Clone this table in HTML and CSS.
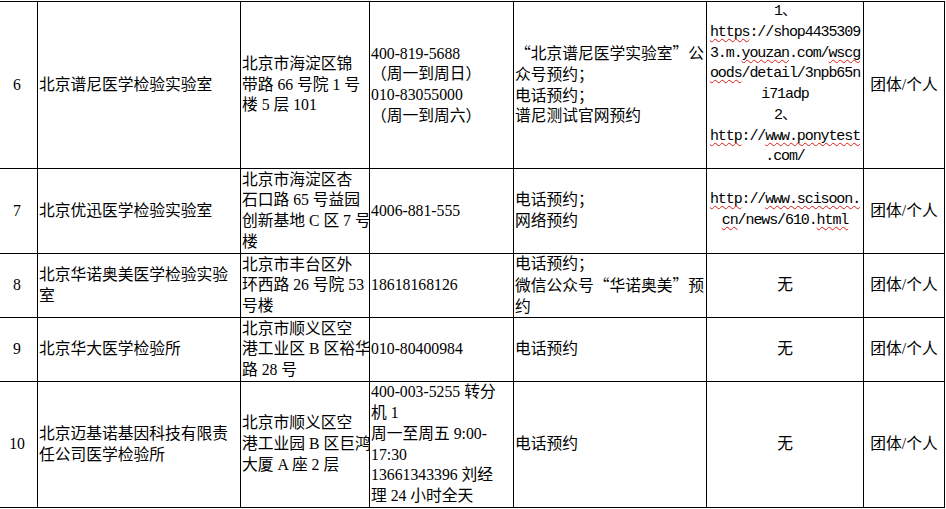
FILE: index.html
```html
<!DOCTYPE html>
<html lang="zh-CN">
<head>
<meta charset="utf-8">
<title>医学检验实验室</title>
<link rel="stylesheet" href="styles.css">
</head>
<body>
<table class="grid">
  <colgroup>
    <col class="c-no"><col class="c-name"><col class="c-addr"><col class="c-tel"><col class="c-way"><col class="c-url"><col class="c-type">
  </colgroup>
  <tbody>
    <tr class="r6">
      <td class="ctr">6</td>
      <td>北京谱尼医学检验实验室</td>
      <td>北京市海淀区锦<br>带路 66 号院 1 号<br>楼 5 层 101</td>
      <td>400-819-5688<br>（周一到周日）<br>010-83055000<br>（周一到周六）</td>
      <td><span class="q">“</span>北京谱尼医学实验室<span class="q">”</span>公<br>众号预约；<br>电话预约；<br>谱尼测试官网预约</td>
      <td class="url">1、<br><span class="sp">https</span>://shop4435309<br>3.m.<span class="sp">youzan</span>.com/<span class="sp">wscg</span><br><span class="sp">oods</span>/detail/3npb65n<br>i71adp<br>2、<br><span class="sp">http</span>://<span class="sp">www.ponytest</span><br>.com/</td>
      <td class="ctr">团体/个人</td>
    </tr>
    <tr class="r7">
      <td class="ctr">7</td>
      <td>北京优迅医学检验实验室</td>
      <td>北京市海淀区杏<br>石口路 65 号益园<br>创新基地 C 区 7 号<br>楼</td>
      <td>4006-881-555</td>
      <td>电话预约；<br>网络预约</td>
      <td class="url"><span class="sp">http</span>://<span class="sp">www.scisoon.</span><br><span class="sp">cn</span>/news/610.<span class="sp">html</span></td>
      <td class="ctr">团体/个人</td>
    </tr>
    <tr class="r8">
      <td class="ctr">8</td>
      <td>北京华诺奥美医学检验实验<br>室</td>
      <td>北京市丰台区外<br>环西路 26 号院 53<br>号楼</td>
      <td>18618168126</td>
      <td>电话预约；<br>微信公众号<span class="q">“</span>华诺奥美<span class="q">”</span>预<br>约</td>
      <td class="ctr">无</td>
      <td class="ctr">团体/个人</td>
    </tr>
    <tr class="r9">
      <td class="ctr">9</td>
      <td>北京华大医学检验所</td>
      <td>北京市顺义区空<br>港工业区 B 区裕华<br>路 28 号</td>
      <td>010-80400984</td>
      <td>电话预约</td>
      <td class="ctr">无</td>
      <td class="ctr">团体/个人</td>
    </tr>
    <tr class="r10">
      <td class="ctr">10</td>
      <td>北京迈基诺基因科技有限责<br>任公司医学检验所</td>
      <td>北京市顺义区空<br>港工业园 B 区巨鸿<br>大厦 A 座 2 层</td>
      <td>400-003-5255 转分<br>机 1<br>周一至周五 9:00-<br>17:30<br>13661343396 刘经<br>理 24 小时全天</td>
      <td>电话预约</td>
      <td class="ctr">无</td>
      <td class="ctr">团体/个人</td>
    </tr>
  </tbody>
</table>
</body>
</html>
```

FILE: styles.css
```css
html, body {
  margin: 0;
  padding: 0;
  background: #fff;
}

body {
  font-family: "Liberation Serif", "Noto Sans CJK SC", serif;
  font-size: 15.75px;
  line-height: 20.75px;
  color: #000;
  overflow: hidden;
}

.grid {
  border-collapse: collapse;
  table-layout: fixed;
  width: 948px;
  margin: 1px 0 0 -4px;
}

.c-no { width: 41px; }
.c-name { width: 203px; }
.c-addr { width: 129px; }
.c-tel { width: 144px; }
.c-way { width: 193px; }
.c-url { width: 157px; }
.c-type { width: 81px; }

.grid td {
  border: 1px solid #000;
  padding: 0 0 0 1px;
  vertical-align: middle;
  text-align: left;
  white-space: nowrap;
  overflow: hidden;
}

.grid td.ctr {
  text-align: center;
  padding: 0;
}

.grid td.url {
  text-align: center;
  padding: 0;
  font-family: "Liberation Mono", "Noto Sans CJK SC", monospace;
  font-size: 15px;
  letter-spacing: -1.1px;
}

.r6 { height: 167px; }
.r7 { height: 85px; }
.r8 { height: 64px; }
.r9 { height: 64px; }
.r10 { height: 124px; }

.q {
  display: inline-block;
  width: 1em;
  text-align: center;
  font-family: "Noto Sans CJK SC", sans-serif;
}

.sp {
  text-decoration: underline wavy #e01818;
  text-decoration-thickness: 1px;
  text-underline-offset: 2px;
  text-decoration-skip-ink: none;
}
```
